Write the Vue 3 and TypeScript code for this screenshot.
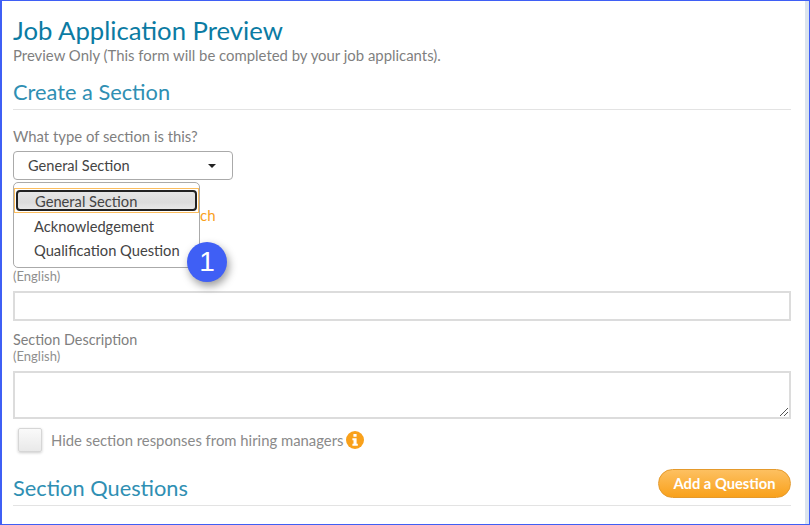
<script setup lang="ts">
const options = ['Acknowledgement', 'Qualification Question']
</script>

<template>
  <div class="frame">
    <main class="page">
      <h1>Job Application Preview</h1>
      <p class="hint">Preview Only (This form will be completed by your job applicants).</p>
      <h2 class="section-head">Create a Section</h2>

      <label class="field-label type-label">What type of section is this?</label>
      <div class="select-wrap">
        <div class="select">
          <span>General Section</span>
          <i class="caret"></i>
        </div>
        <div class="menu">
          <div class="menu-selected"><span>General Section</span></div>
          <div v-for="opt in options" :key="opt" class="menu-item">{{ opt }}</div>
        </div>
        <div class="badge">1</div>
      </div>
      <div class="behind">
        <span class="orange-link">ch</span>
      </div>

      <div class="sub-label">(English)</div>
      <div class="input"></div>

      <label class="field-label desc-label">Section Description</label>
      <div class="sub-label">(English)</div>
      <div class="textarea">
        <svg class="grip" width="10" height="10" viewBox="0 0 10 10">
          <path d="M1 9 9 1M5 9 9 5" stroke="#555" stroke-width="1" fill="none" />
        </svg>
      </div>

      <div class="check-row">
        <div class="checkbox"></div>
        <span class="check-text">Hide section responses from hiring managers</span>
        <svg class="info" width="18" height="18" viewBox="0 0 18 18">
          <circle cx="9" cy="9" r="9" fill="#f9a11b" />
          <rect x="7.4" y="3" width="3.2" height="2.8" rx=".5" fill="#fff" />
          <path d="M6.4 7.2h4.2v5.6h1.2v2H6.4v-2h1.1V9.2H6.4z" fill="#fff" />
        </svg>
      </div>

      <div class="questions-head">
        <h2>Section Questions</h2>
        <button class="add-btn" type="button">Add a Question</button>
      </div>
    </main>
  </div>
</template>

<style>
html,
body {
  margin: 0;
  overflow: hidden;
  background: #fff;
}
</style>

<style scoped>
.frame {
  box-sizing: border-box;
  width: 810px;
  height: 525px;
  border: 1px solid #3f5ff5;
  border-left-width: 2px;
  background: #fff;
  display: flex;
  font-family: Lato, 'Open Sans', sans-serif;
  overflow: hidden;
}

.page {
  box-sizing: border-box;
  width: 807px;
  border-right: 4px solid #dbe4ee;
  padding: 0 14px 0 11px;
  flex: none;
}

h1 {
  margin: 13px 0 0;
  font-size: 25.7px;
  line-height: 32px;
  font-weight: 400;
  color: #0b7ba3;
}

.hint {
  margin: 1px 0 0;
  font-size: 14.9px;
  line-height: 17px;
  color: #7f7f7f;
}

h2 {
  margin: 0;
  font-size: 21.8px;
  line-height: 27px;
  font-weight: 400;
  color: #2f8fb3;
}

.section-head {
  margin-top: 14px;
  padding-bottom: 4px;
  border-bottom: 1px solid #e3e3e3;
}

.field-label {
  display: block;
  font-size: 14.85px;
  line-height: 17px;
  color: #7f7f7f;
}

.type-label {
  margin-top: 18px;
}

.select-wrap {
  position: relative;
  margin-top: 6px;
  width: 220px;
  height: 29px;
}

.select {
  box-sizing: border-box;
  height: 29px;
  border: 1px solid #aaa;
  border-radius: 4px;
  display: flex;
  align-items: center;
  justify-content: space-between;
  padding: 0 14px;
  font-size: 14.6px;
  color: #444;
}

.caret {
  width: 0;
  height: 0;
  border-left: 4px solid transparent;
  border-right: 4px solid transparent;
  border-top: 4px solid #222;
  margin-right: 2px;
}

.menu {
  position: absolute;
  top: 31px;
  left: 0;
  box-sizing: border-box;
  width: 187px;
  height: 86px;
  background: #fff;
  border: 1px solid #aaa;
  border-radius: 5px;
  z-index: 2;
  font-size: 14.7px;
  color: #444;
}

.menu-selected {
  box-sizing: border-box;
  margin: 5px 0 1px;
  height: 25px;
  border: 1px solid #fbbd5e;
  padding: 1px;
}

.menu-selected span {
  display: block;
  box-sizing: border-box;
  height: 21px;
  padding-left: 17px;
  line-height: 18px;
  border: 2px solid #222;
  border-radius: 4px;
  background: linear-gradient(#e6e6e6, #dcdcdc 60%, #e8e8e8);
}

.menu-item {
  height: 24px;
  line-height: 24px;
  padding-left: 20px;
}

.badge {
  position: absolute;
  top: 91px;
  left: 174px;
  width: 40px;
  height: 40px;
  border-radius: 50%;
  background: #3f5ff5;
  color: #fff;
  font-family: 'Liberation Sans', sans-serif;
  font-size: 28px;
  line-height: 40px;
  text-align: center;
  box-shadow: 2px 4px 8px rgba(0, 0, 0, 0.4);
  z-index: 3;
}

.behind {
  box-sizing: border-box;
  height: 88px;
  padding-left: 187px;
  padding-top: 27px;
  font-size: 15px;
  line-height: 17px;
}

.orange-link {
  color: #f9a11b;
}

.sub-label {
  font-size: 13px;
  line-height: 16px;
  color: #8f8f8f;
}

.input {
  box-sizing: border-box;
  margin-top: 7px;
  height: 30px;
  border: 2px solid #dcdcdc;
}

.desc-label {
  margin-top: 10px;
  font-size: 14.4px;
}

.textarea {
  position: relative;
  box-sizing: border-box;
  margin-top: 7px;
  height: 48px;
  border: 2px solid #dcdcdc;
}

.grip {
  position: absolute;
  right: 0;
  bottom: 0;
}

.check-row {
  display: flex;
  align-items: center;
  margin: 8px 0 0 5px;
  height: 26px;
  font-size: 14.85px;
  color: #8a8a8a;
}

.checkbox {
  box-sizing: border-box;
  width: 24px;
  height: 24px;
  border: 1px solid #d6d6d6;
  border-radius: 2px;
  background: linear-gradient(#fafafa, #e9e9e9);
  box-shadow: 0 1px 3px rgba(0, 0, 0, 0.2);
}

.check-text {
  margin-left: 9px;
}

.info {
  margin-left: 3px;
}

.questions-head {
  display: flex;
  align-items: flex-end;
  justify-content: space-between;
  margin-top: 16px;
  padding-bottom: 4px;
  border-bottom: 1px solid #e3e3e3;
}

.add-btn {
  box-sizing: border-box;
  width: 133px;
  height: 29px;
  margin-bottom: 3px;
  padding: 0 0 2px;
  border: 1px solid #e59a2c;
  border-radius: 15px;
  background: linear-gradient(#fdc061, #f9a11b);
  color: #fff;
  font: 700 14.7px Lato, sans-serif;
}
</style>
